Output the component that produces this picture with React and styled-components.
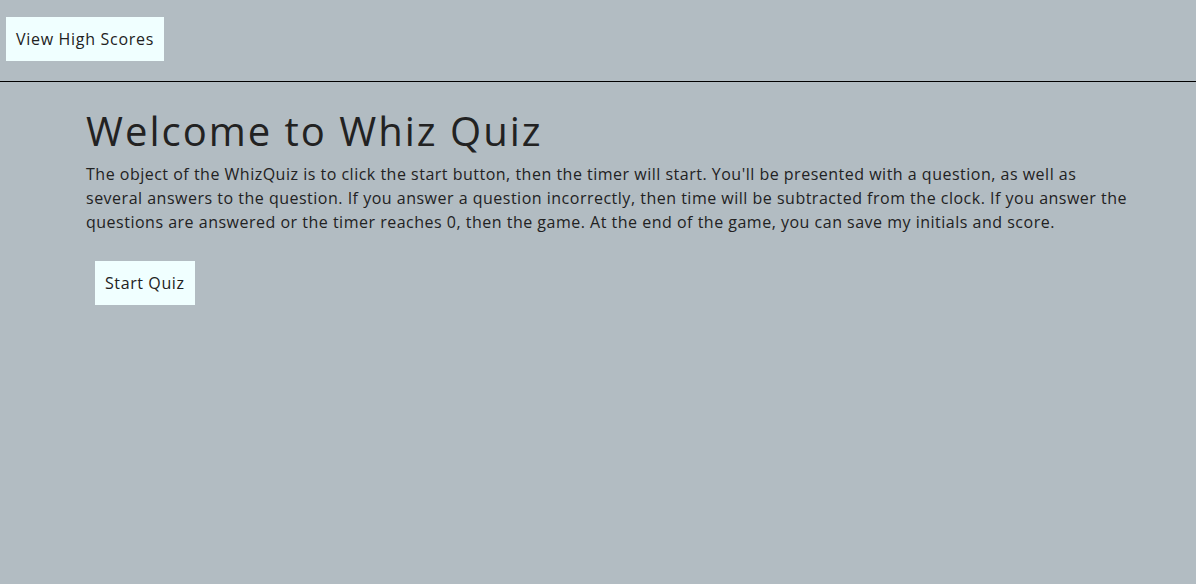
import styled, { createGlobalStyle } from 'styled-components';

const GlobalStyle = createGlobalStyle`
  html, body {
    margin: 0;
    padding: 0;
    background: #b2bcc2;
    font-family: "Open Sans", "Liberation Sans", sans-serif;
    color: #222;
  }
`;

function App() {
  return (
    <>
      <GlobalStyle />
      <Header>
        <Button>View High Scores</Button>
      </Header>
      <Main>
        <Title>Welcome to Whiz Quiz</Title>
        <Intro>
          The object of the WhizQuiz is to click the start button, then the timer will start. You'll be
          presented with a question, as well as several answers to the question. If you answer a question
          incorrectly, then time will be subtracted from the clock. If you answer the questions are answered
          or the timer reaches 0, then the game. At the end of the game, you can save my initials and score.
        </Intro>
        <StartButton>Start Quiz</StartButton>
      </Main>
    </>
  );
}

const Header = styled.header`
  display: flex;
  align-items: flex-start;
  height: 82px;
  padding: 17px 6px 0;
  box-sizing: border-box;
  border-bottom: 1px solid #000;
`;

const Button = styled.button`
  background: #f0ffff;
  border: none;
  padding: 0 10px;
  height: 44px;
  font-family: inherit;
  font-size: 16px;
  letter-spacing: 0.7px;
  color: #222;
  cursor: pointer;
`;

const StartButton = styled(Button)`
  margin-left: 9px;
  letter-spacing: 0.6px;
`;

const Main = styled.main`
  padding: 0 68px 0 86px;
`;

const Title = styled.h1`
  font-size: 40px;
  font-weight: 400;
  line-height: 48px;
  letter-spacing: 2px;
  margin: 25px 0 7px;
`;

const Intro = styled.p`
  font-size: 16px;
  line-height: 24px;
  letter-spacing: 0.5px;
  margin: 0 0 27px;
`;

export default App;
